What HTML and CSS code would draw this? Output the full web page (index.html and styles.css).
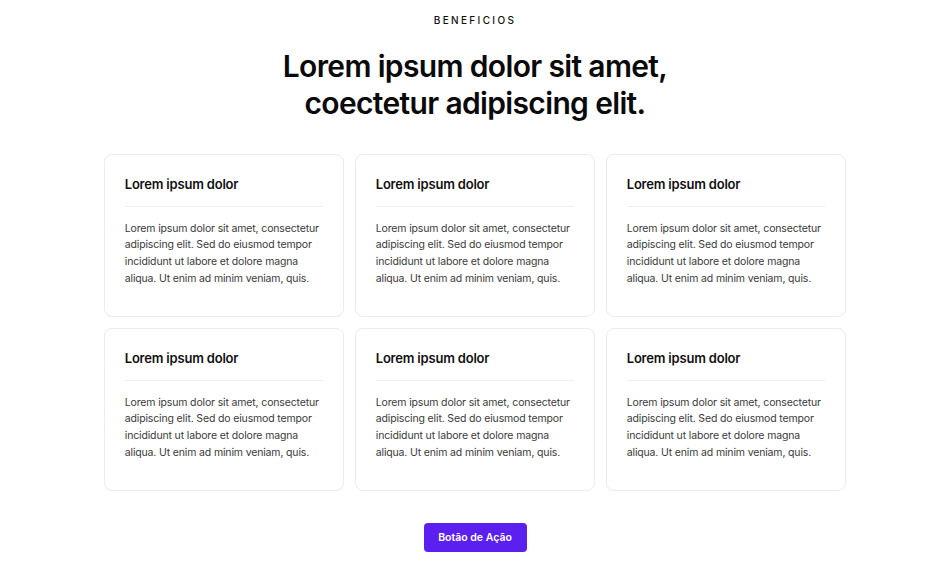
FILE: index.html
```html
<!DOCTYPE html>
<html lang="pt">
<head>
<meta charset="utf-8">
<link rel="stylesheet" href="styles.css">
</head>
<body>
<section class="benefits">
  <p class="eyebrow">BENEFICIOS</p>
  <h1 class="title">Lorem ipsum dolor sit amet,<br>coectetur adipiscing elit.</h1>
  <div class="grid">
    <div class="card"><h2 class="card-title">Lorem ipsum dolor</h2><p class="card-text">Lorem ipsum dolor sit amet, consectetur adipiscing elit. Sed do eiusmod tempor incididunt ut labore et dolore magna aliqua. Ut enim ad minim veniam, quis.</p></div>
    <div class="card"><h2 class="card-title">Lorem ipsum dolor</h2><p class="card-text">Lorem ipsum dolor sit amet, consectetur adipiscing elit. Sed do eiusmod tempor incididunt ut labore et dolore magna aliqua. Ut enim ad minim veniam, quis.</p></div>
    <div class="card"><h2 class="card-title">Lorem ipsum dolor</h2><p class="card-text">Lorem ipsum dolor sit amet, consectetur adipiscing elit. Sed do eiusmod tempor incididunt ut labore et dolore magna aliqua. Ut enim ad minim veniam, quis.</p></div>
    <div class="card"><h2 class="card-title">Lorem ipsum dolor</h2><p class="card-text">Lorem ipsum dolor sit amet, consectetur adipiscing elit. Sed do eiusmod tempor incididunt ut labore et dolore magna aliqua. Ut enim ad minim veniam, quis.</p></div>
    <div class="card"><h2 class="card-title">Lorem ipsum dolor</h2><p class="card-text">Lorem ipsum dolor sit amet, consectetur adipiscing elit. Sed do eiusmod tempor incididunt ut labore et dolore magna aliqua. Ut enim ad minim veniam, quis.</p></div>
    <div class="card"><h2 class="card-title">Lorem ipsum dolor</h2><p class="card-text">Lorem ipsum dolor sit amet, consectetur adipiscing elit. Sed do eiusmod tempor incididunt ut labore et dolore magna aliqua. Ut enim ad minim veniam, quis.</p></div>
  </div>
  <a class="cta" href="#">Botão de Ação</a>
</section>
</body>
</html>
```
FILE: styles.css
```css
* { box-sizing: border-box; }
html, body { margin: 0; padding: 0; background: #fff; }
body { font-family: Inter, "Noto Sans", sans-serif; color: #111; }
.benefits {
  display: flex;
  flex-direction: column;
  align-items: center;
  padding-top: 13px;
  padding-left: 5px;
}
.eyebrow {
  margin: 0;
  font-size: 10px;
  line-height: 14px;
  font-weight: 500;
  letter-spacing: 2.35px;
  color: #111;
}
.title {
  margin: 21px 0 0;
  font-size: 30px;
  line-height: 37px;
  font-weight: 600;
  letter-spacing: -0.65px;
  text-align: center;
  color: #0a0a0a;
}
.grid {
  margin-top: 32px;
  display: grid;
  grid-template-columns: repeat(3, 240.5px);
  column-gap: 10.5px;
  row-gap: 11px;
}
.card {
  border: 1px solid #ebebeb;
  border-radius: 8px;
  padding: 20px 20px 30px;
  height: 163px;
}
.card-title {
  margin: 0;
  font-size: 13px;
  line-height: 18px;
  font-weight: 600;
  letter-spacing: -0.2px;
  color: #111;
  padding-bottom: 13px;
  border-bottom: 1px solid #efefef;
}
.card-text {
  margin: 13.5px 0 0;
  font-size: 10.5px;
  line-height: 16.8px;
  letter-spacing: -0.15px;
  color: #3a3a3a;
}
.cta {
  margin-top: 32px;
  display: inline-flex;
  align-items: center;
  justify-content: center;
  width: 103px;
  height: 29px;
  background: #5b1ff0;
  border-radius: 4px;
  color: #fff;
  font-size: 10.5px;
  font-weight: 600;
  text-decoration: none;
}
```
